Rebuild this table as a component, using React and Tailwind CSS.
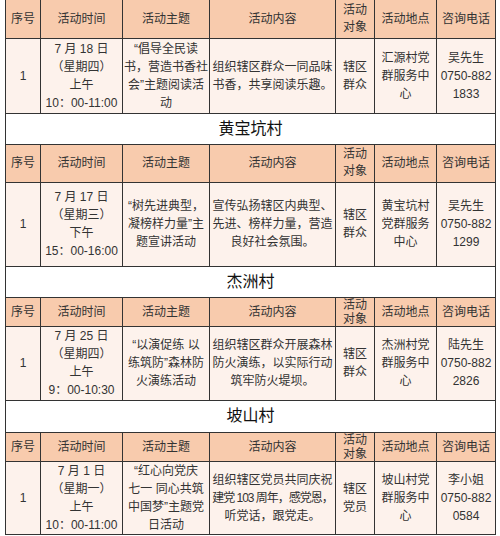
import React from 'react';

// 各村活动安排表
const sections = [
  {
    village: null,
    compactHeader: false,
    heights: ['h-[38px]', 'h-[75px]'],
    time: ['7 月 18 日', '（星期四）', '上午', '10：00-11:00'],
    theme: ['“倡导全民读', '书，营造书香社', '会”主题阅读活', '动'],
    content: ['组织辖区群众一同品味', '书香，共享阅读乐趣。'],
    target: ['辖区', '群众'],
    place: ['汇源村党', '群服务中', '心'],
    phone: ['吴先生', '0750-882', '1833'],
  },
  {
    village: '黄宝坑村',
    titleHeight: 'h-[31px]',
    compactHeader: false,
    heights: ['h-[38px]', 'h-[84px]'],
    time: ['7 月 17 日', '（星期三）', '下午', '15：00-16:00'],
    theme: ['“树先进典型，', '凝榜样力量”主', '题宣讲活动'],
    content: ['宣传弘扬辖区内典型、', '先进、榜样力量，营造', '良好社会氛围。'],
    target: ['辖区', '群众'],
    place: ['黄宝坑村', '党群服务', '中心'],
    phone: ['吴先生', '0750-882', '1299'],
  },
  {
    village: '杰洲村',
    titleHeight: 'h-[31px]',
    compactHeader: true,
    heights: ['h-[29px]', 'h-[74px]'],
    time: ['7 月 25 日', '（星期四）', '上午', '9：00-10:30'],
    theme: ['“以演促练 以', '练筑防”森林防', '火演练活动'],
    content: ['组织辖区群众开展森林', '防火演练，以实际行动', '筑牢防火堤坝。'],
    target: ['辖区', '群众'],
    place: ['杰洲村党', '群服务中', '心'],
    phone: ['陆先生', '0750-882', '2826'],
  },
  {
    village: '坡山村',
    titleHeight: 'h-[32px]',
    compactHeader: true,
    heights: ['h-[29px]', 'h-[73px]'],
    time: ['7 月 1 日', '（星期一）', '上午', '10：00-11:00'],
    theme: ['“红心向党庆', '七一 同心共筑', '中国梦”主题党', '日活动'],
    content: ['组织辖区党员共同庆祝', '建党 103 周年，感党恩，', '听党话，跟党走。'],
    target: ['辖区', '党员'],
    place: ['坡山村党', '群服务中', '心'],
    phone: ['李小姐', '0750-882', '0584'],
  },
];

const headers = ['序号', '活动时间', '活动主题', '活动内容', null, '活动地点', '咨询电话'];

const cell = 'border border-[#333] text-center align-middle p-0 whitespace-nowrap';

const Lines = ({ lines, tight }) => (
  <>
    {lines.map((l, i) => (
      <div key={i} className={l.length > 11 && tight ? 'tracking-[-1px]' : ''}>
        {l}
      </div>
    ))}
  </>
);

export default function App() {
  return (
    <div className="bg-white w-[500px] h-[536px] overflow-hidden font-['Liberation_Sans','Noto_Sans_CJK_SC',sans-serif] text-[12px] text-[#333]">
      <table className="table-fixed border-collapse ml-[5px] w-[490px]">
        <colgroup>
          <col className="w-[35px]" />
          <col className="w-[82px]" />
          <col className="w-[87px]" />
          <col className="w-[126px]" />
          <col className="w-[39px]" />
          <col className="w-[62px]" />
          <col className="w-[59px]" />
        </colgroup>
        <tbody>
          {sections.map((s, idx) => (
            <React.Fragment key={idx}>
              {s.village && (
                <tr className={s.titleHeight}>
                  <td colSpan={7} className={`${cell} bg-white text-[16px] text-[#111]`}>
                    {s.village}
                  </td>
                </tr>
              )}
              <tr className={`${s.heights[0]} bg-[#f8cbad]`}>
                {headers.map((h, i) => (
                  <td key={i} className={`${cell} ${idx === 0 ? 'border-t-0' : ''}`}>
                    {h ? (
                      h
                    ) : (
                      <div className={s.compactHeader ? 'leading-[14px]' : 'leading-[17px]'}>
                        <div>活动</div>
                        <div>对象</div>
                      </div>
                    )}
                  </td>
                ))}
              </tr>
              <tr className={`${s.heights[1]} bg-[#fdf2ec] leading-[18px]`}>
                <td className={cell}>1</td>
                <td className={cell}>
                  <Lines lines={s.time} />
                </td>
                <td className={cell}>
                  <Lines lines={s.theme} />
                </td>
                <td className={cell}>
                  <Lines lines={s.content} tight />
                </td>
                <td className={cell}>
                  <Lines lines={s.target} />
                </td>
                <td className={cell}>
                  <Lines lines={s.place} />
                </td>
                <td className={cell}>
                  <Lines lines={s.phone} />
                </td>
              </tr>
            </React.Fragment>
          ))}
        </tbody>
      </table>
    </div>
  );
}
